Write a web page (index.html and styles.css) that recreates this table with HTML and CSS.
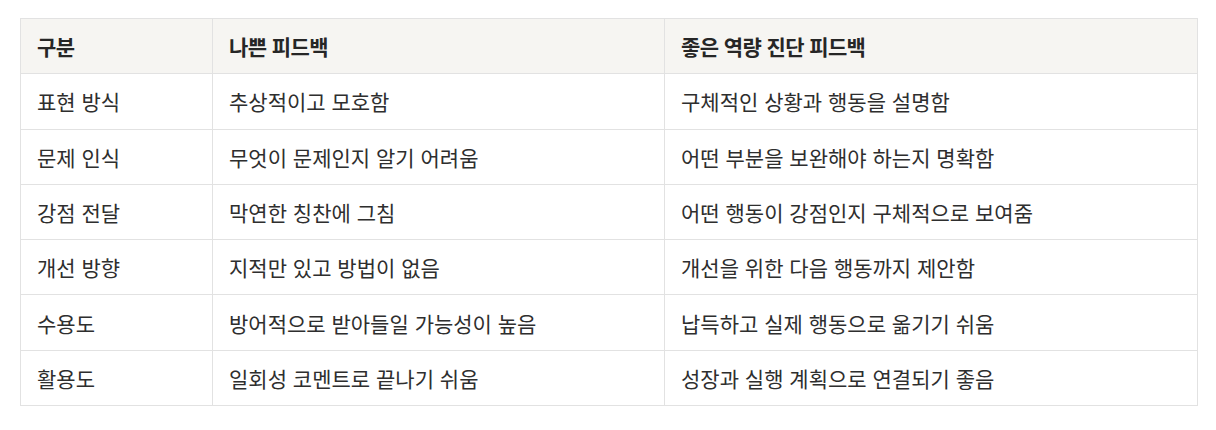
FILE: index.html
```html
<!DOCTYPE html>
<html lang="ko">
<head>
<meta charset="utf-8">
<link rel="stylesheet" href="styles.css">
</head>
<body>
<div class="wrap">
<table class="cmp">
<colgroup><col class="c1"><col class="c2"><col class="c3"></colgroup>
<thead>
<tr><th>구분</th><th>나쁜 피드백</th><th>좋은 역량 진단 피드백</th></tr>
</thead>
<tbody>
<tr><td>표현 방식</td><td>추상적이고 모호함</td><td>구체적인 상황과 행동을 설명함</td></tr>
<tr><td>문제 인식</td><td>무엇이 문제인지 알기 어려움</td><td>어떤 부분을 보완해야 하는지 명확함</td></tr>
<tr><td>강점 전달</td><td>막연한 칭찬에 그침</td><td>어떤 행동이 강점인지 구체적으로 보여줌</td></tr>
<tr><td>개선 방향</td><td>지적만 있고 방법이 없음</td><td>개선을 위한 다음 행동까지 제안함</td></tr>
<tr><td>수용도</td><td>방어적으로 받아들일 가능성이 높음</td><td>납득하고 실제 행동으로 옮기기 쉬움</td></tr>
<tr><td>활용도</td><td>일회성 코멘트로 끝나기 쉬움</td><td>성장과 실행 계획으로 연결되기 좋음</td></tr>
</tbody>
</table>
</div>
</body>
</html>
```
FILE: styles.css
```css
html, body {
  margin: 0;
  padding: 0;
  background: #ffffff;
}
.wrap {
  padding: 18px 19px 0 20px;
}
.cmp {
  width: 1177px;
  border-collapse: collapse;
  font-family: "Noto Sans CJK KR", "Noto Sans", sans-serif;
  font-size: 21px;
  color: #2e2e2e;
  table-layout: fixed;
}
.c1 { width: 192px; }
.c2 { width: 452px; }
.c3 { width: 533px; }
.cmp th, .cmp td {
  border: 1px solid #e2e2e2;
  text-align: left;
  padding: 0 16px;
  height: 54.3px;
  line-height: 24px;
  vertical-align: middle;
}
.cmp th {
  background: #f6f5f2;
  font-weight: 600;
  letter-spacing: -0.6px;
  color: #262626;
}
```
